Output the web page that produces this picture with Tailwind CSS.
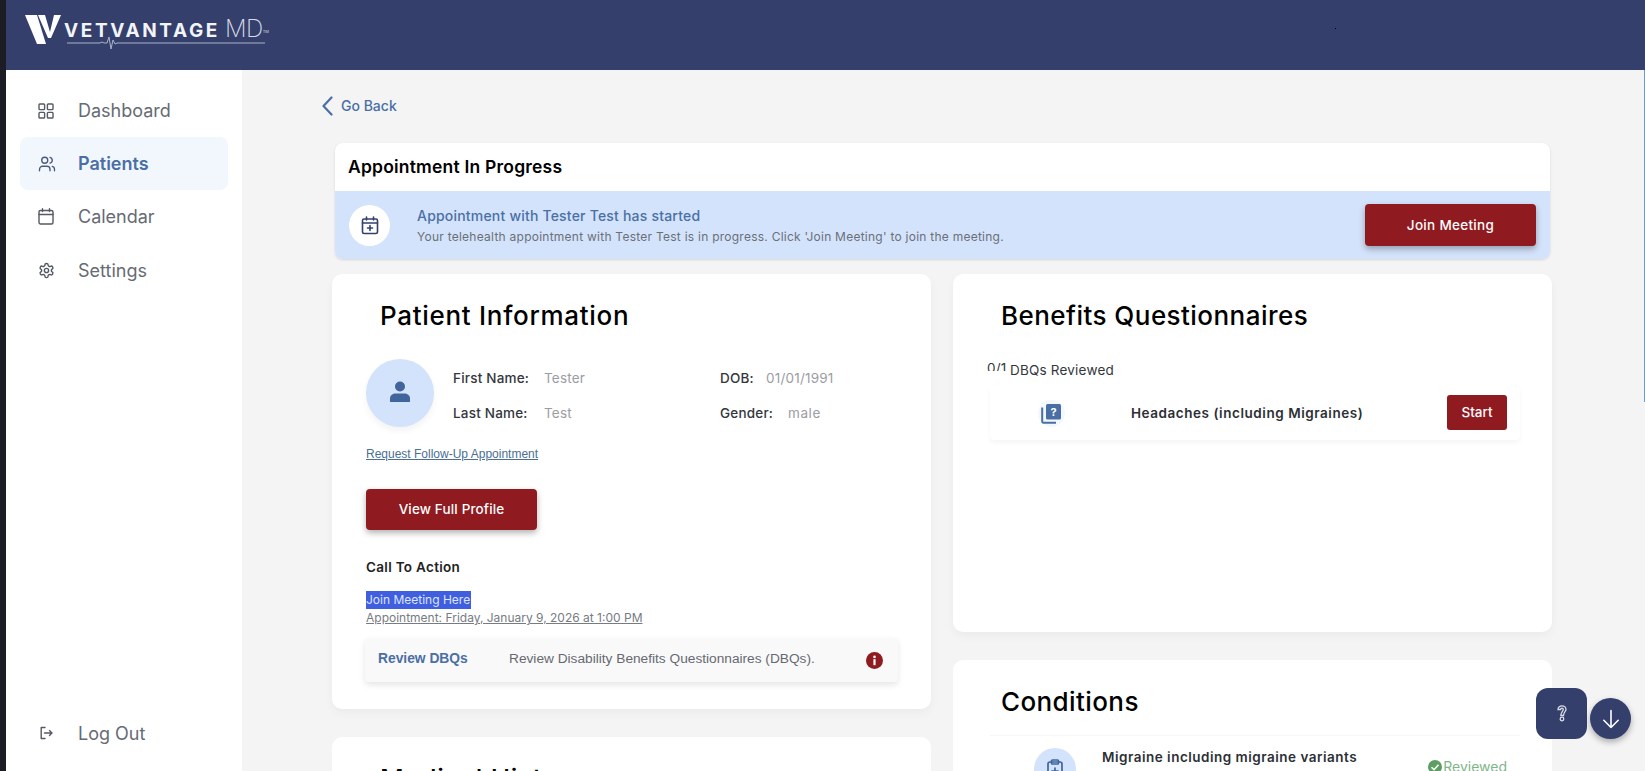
<!DOCTYPE html>
<html lang="en">
<head>
  <meta charset="UTF-8" />
  <meta name="viewport" content="width=device-width, initial-scale=1.0" />
  <script src="https://cdn.jsdelivr.net/npm/@tailwindcss/browser@4"></script>
  <title>VetVantage MD</title>
</head>
<body class="h-[771px] overflow-hidden bg-[#1c1c24] [font-family:Inter,sans-serif]">
  <div class="flex h-[771px] pl-[6px]">
    <div class="relative flex-1 flex flex-col min-w-0">

      <!-- top bar -->
      <header class="relative h-[70px] shrink-0 bg-[#34406b] flex items-start pl-[19px] pt-[14px]">
        <svg width="36" height="31" viewBox="0 0 36 31" class="shrink-0">
          <polygon points="0,1 12,1 21,30 12,30" fill="#fff"/>
          <polygon points="13,1 20,1 25,18 29,1 36,1 26,24 23,24" fill="#fff"/>
        </svg>
        <div class="relative ml-[3px] w-[205px] h-[36px]">
          <div class="flex items-baseline h-[26px] pt-[5px] leading-[20px]">
            <span class="text-[19px] font-bold tracking-[2.6px] text-[#f2f4f8]">VETVANTAGE</span>
            <span class="ml-[5px] text-[24px] font-extralight tracking-[-0.5px] text-[#d8dce8]">MD</span>
            <span class="text-[4px] text-[#d8dce8] self-start mt-[3px]">TM</span>
          </div>
          <svg width="200" height="14" viewBox="0 0 200 14" class="absolute left-[3px] top-[22px]" fill="none" stroke="#aab4cc" stroke-width="1">
            <path d="M0 7H33L35 6L37 7L40 7L42 1L44 13L46 4L48 8L50 7H198"/>
          </svg>
        </div>
        <span class="absolute left-[1329px] top-[28px] w-px h-px bg-black"></span>
      </header>

      <div class="flex flex-1 min-h-0">
        <!-- sidebar -->
        <aside class="w-[236px] shrink-0 bg-white flex flex-col justify-between px-[14px] pt-[14px] pb-[22px]">
          <nav class="flex flex-col text-[18px] text-[#666b73]">
            <a class="flex items-center h-[53px] pl-[18px] gap-[24px]">
              <svg width="16" height="16" viewBox="0 0 16 16" fill="none" stroke="#555a63" stroke-width="1.4" class="shrink-0"><rect x="1" y="1" width="5.6" height="5.6" rx=".8"/><rect x="9.4" y="1" width="5.6" height="5.6" rx=".8"/><rect x="1" y="9.4" width="5.6" height="5.6" rx=".8"/><rect x="9.4" y="9.4" width="5.6" height="5.6" rx=".8"/></svg>
              Dashboard
            </a>
            <a class="flex items-center h-[53px] pl-[18px] gap-[22px] rounded-[8px] bg-[#f2f7fd] font-semibold text-[#4a6fa5]">
              <svg width="18" height="18" viewBox="0 0 24 24" fill="none" stroke="#4a5a7a" stroke-width="1.8" stroke-linecap="round" stroke-linejoin="round" class="shrink-0"><path d="M16 21v-2a4 4 0 0 0-4-4H6a4 4 0 0 0-4 4v2"/><circle cx="9" cy="7" r="4"/><path d="M22 21v-2a4 4 0 0 0-3-3.87"/><path d="M16 3.13a4 4 0 0 1 0 7.75"/></svg>
              Patients
            </a>
            <a class="flex items-center h-[53px] pl-[18px] gap-[24px]">
              <svg width="16" height="17" viewBox="0 0 16 17" fill="none" stroke="#555a63" stroke-width="1.4" stroke-linecap="round" class="shrink-0"><rect x="1" y="2.5" width="14" height="13.5" rx="1.5"/><path d="M1 6.5H15M4.5 .8V3.5M11.5 .8V3.5"/></svg>
              Calendar
            </a>
            <a class="flex items-center h-[54px] pl-[18px] gap-[23px]">
              <svg width="17" height="17" viewBox="0 0 24 24" fill="none" stroke="#555a63" stroke-width="2" stroke-linecap="round" stroke-linejoin="round" class="shrink-0"><path d="M12.22 2h-.44a2 2 0 0 0-2 2v.18a2 2 0 0 1-1 1.73l-.43.25a2 2 0 0 1-2 0l-.15-.08a2 2 0 0 0-2.73.73l-.22.38a2 2 0 0 0 .73 2.73l.15.1a2 2 0 0 1 1 1.72v.51a2 2 0 0 1-1 1.74l-.15.09a2 2 0 0 0-.73 2.73l.22.38a2 2 0 0 0 2.73.73l.15-.08a2 2 0 0 1 2 0l.43.25a2 2 0 0 1 1 1.73V20a2 2 0 0 0 2 2h.44a2 2 0 0 0 2-2v-.18a2 2 0 0 1 1-1.73l.43-.25a2 2 0 0 1 2 0l.15.08a2 2 0 0 0 2.73-.73l.22-.39a2 2 0 0 0-.73-2.73l-.15-.08a2 2 0 0 1-1-1.74v-.5a2 2 0 0 1 1-1.74l.15-.09a2 2 0 0 0 .73-2.73l-.22-.38a2 2 0 0 0-2.73-.73l-.15.08a2 2 0 0 1-2 0l-.43-.25a2 2 0 0 1-1-1.73V4a2 2 0 0 0-2-2z"/><circle cx="12" cy="12" r="3"/></svg>
              Settings
            </a>
          </nav>
          <a class="flex items-center h-[32px] pl-[18px] gap-[24px] text-[18px] text-[#666b73]">
            <svg width="16" height="16" viewBox="0 0 16 16" fill="none" stroke="#555a63" stroke-width="1.4" stroke-linecap="round" stroke-linejoin="round" class="shrink-0"><path d="M7 2.5H3.2V13.5H7M6.5 8H14M11.5 5.5L14 8L11.5 10.5"/></svg>
            Log Out
          </a>
        </aside>

        <!-- main content -->
        <main class="flex-1 min-w-0 bg-[#f4f4f5] overflow-hidden pl-[90px]">
          <a class="flex items-center h-[20px] mt-[26px] -ml-[10px] gap-[8px] text-[14px] font-medium text-[#4a6fa5]">
            <svg width="11" height="20" viewBox="0 0 11 20" fill="none" stroke="#4a6fa5" stroke-width="2.2" stroke-linecap="round" stroke-linejoin="round"><path d="M9.5 1.5L1.5 10L9.5 18.5"/></svg>
            <span class="-mt-[1px]">Go Back</span>
          </a>

          <!-- appointment banner -->
          <section class="w-[1215px] ml-[3px] mt-[27px] rounded-[8px] overflow-hidden bg-white shadow-sm">
            <h2 class="h-[48px] flex items-center pl-[13px] pt-[1px] text-[17.5px] tracking-[0.2px] font-semibold text-black">Appointment In Progress</h2>
            <div class="h-[68px] bg-[#d3e3fb] flex items-center pl-[14px] pr-[14px]">
              <span class="w-[41px] h-[41px] rounded-full bg-white flex items-center justify-center shrink-0">
                <svg width="18" height="19" viewBox="0 0 18 19" fill="none" stroke="#34406b" stroke-width="1.6" stroke-linecap="round"><rect x="1.5" y="3" width="15" height="14.5" rx="1.6"/><path d="M1.5 7H16.5M5.5 1V4M12.5 1V4M9 9.5V14.5M6.5 12H11.5"/></svg>
              </span>
              <div class="ml-[27px] flex-1 min-w-0">
                <p class="text-[14px] tracking-[0.2px] leading-[19px] font-medium text-[#4a6fa5]">Appointment with Tester Test has started</p>
                <p class="mt-[3px] text-[12px] tracking-[0.25px] leading-[17px] text-[#6b7078]">Your telehealth appointment with Tester Test is in progress. Click 'Join Meeting' to join the meeting.</p>
              </div>
              <button class="w-[171px] h-[42px] rounded-[4px] bg-[#8f1a1f] text-white text-[13.5px] tracking-[0.3px] font-medium shadow-[0_3px_6px_rgba(0,0,0,0.3)]">Join Meeting</button>
            </div>
          </section>

          <div class="grid grid-cols-[599px_599px] gap-x-[22px] mt-[15px] w-[1220px]">
            <!-- left column -->
            <div class="flex flex-col gap-[28px]">
              <section class="h-[435px] bg-white rounded-[10px] shadow-[0_4px_10px_rgba(0,0,0,0.04)] pl-[34px] pr-[33px] pt-[25px]">
                <h2 class="pl-[14px] h-[34px] leading-[34px] text-[26px] tracking-[0.7px] font-medium text-black">Patient Information</h2>

                <div class="flex items-center mt-[26px]">
                  <span class="w-[68px] h-[68px] rounded-full bg-[#d3e3fb] flex items-center justify-center shrink-0 shadow-[0_4px_6px_rgba(0,0,0,0.05)]">
                    <svg width="20" height="21" viewBox="0 0 20 21" fill="#40659d" class="-mt-[3px]"><circle cx="10" cy="5.5" r="5"/><path d="M0 21V17.5C0 14 3 12.5 5.5 12.5H14.5C17 12.5 20 14 20 17.5V21Z"/></svg>
                  </span>
                  <div class="ml-[19px] mt-[5px] grid grid-cols-[267px_1fr] gap-y-[17px] text-[13.5px] tracking-[0.2px] leading-[18px] text-[#33373d] font-medium">
                    <div class="flex"><span class="w-[91px]">First Name:</span><span class="font-normal text-[#9a9da3]">Tester</span></div>
                    <div class="flex"><span class="w-[46px]">DOB:</span><span class="font-normal text-[#9a9da3]">01/01/1991</span></div>
                    <div class="flex"><span class="w-[91px]">Last Name:</span><span class="font-normal text-[#9a9da3]">Test</span></div>
                    <div class="flex"><span class="w-[68px]">Gender:</span><span class="font-normal tracking-[0.6px] text-[#9a9da3]">male</span></div>
                  </div>
                </div>

                <a class="block mt-[19px] h-[16px] leading-[16px] text-[12px] [font-family:'Liberation_Sans',sans-serif] underline text-[#4a6f94]">Request Follow-Up Appointment</a>

                <button class="block mt-[27px] w-[171px] h-[41px] rounded-[4px] bg-[#8f1a1f] text-white text-[13.5px] tracking-[0.15px] font-medium shadow-[0_3px_6px_rgba(0,0,0,0.3)]">View Full Profile</button>

                <h3 class="mt-[28px] h-[18px] leading-[18px] text-[13.5px] tracking-[0.3px] font-semibold text-[#222]">Call To Action</h3>

                <a class="block mt-[15px] w-[105px] h-[18px] leading-[18px] bg-[#3f5fe0] text-[12px] text-[#dde4fb] whitespace-nowrap overflow-hidden">Join Meeting Here</a>
                <a class="block h-[18px] leading-[18px] text-[12px] underline text-[#777b82]">Appointment: Friday, January 9, 2026 at 1:00 PM</a>

                <div class="flex items-center h-[44px] mt-[11px] -ml-px pl-[13px] pr-[15px] w-[533px] rounded-[4px] bg-[#f9f9fa] shadow-[0_3px_6px_rgba(0,0,0,0.1)] [font-family:'Liberation_Sans',sans-serif]">
                  <span class="w-[131px] -mt-[1px] text-[13.8px] font-bold text-[#4a6fa5]">Review DBQs</span>
                  <span class="flex-1 -mt-[1px] text-[13.7px] text-[#666a70]">Review Disability Benefits Questionnaires (DBQs).</span>
                  <svg width="17" height="17" viewBox="0 0 17 17"><circle cx="8.5" cy="8.5" r="8.5" fill="#8f1a1f"/><rect x="7.4" y="7.2" width="2.2" height="6" fill="#fff"/><circle cx="8.5" cy="4.9" r="1.3" fill="#fff"/></svg>
                </div>
              </section>

              <section class="h-[200px] bg-white rounded-[10px] pl-[48px] pt-[25px]">
                <h2 class="h-[34px] leading-[34px] text-[26px] tracking-[0.7px] font-medium text-black">Medical History</h2>
              </section>
            </div>

            <!-- right column -->
            <div class="flex flex-col gap-[28px]">
              <section class="h-[358px] bg-white rounded-[10px] shadow-[0_4px_10px_rgba(0,0,0,0.04)] pl-[34px] pr-[32px] pt-[25px]">
                <h2 class="pl-[14px] h-[34px] leading-[34px] text-[26px] tracking-[0.45px] font-medium text-black">Benefits Questionnaires</h2>
                <div class="flex items-center h-[18px] mt-[28px] text-[13.5px] tracking-[0.2px] text-[#33373d]">
                  <span class="h-[11px] overflow-hidden leading-[16px] self-start -mt-[1px] w-[23px]">0/1</span>
                  <span>DBQs Reviewed</span>
                </div>
                <div class="flex items-center h-[54px] mt-[7px] ml-[3px] w-[530px] pl-[48px] pr-[13px] rounded-[4px] shadow-[0_3px_5px_rgba(0,0,0,0.04)]">
                  <span class="w-[27px] h-[27px] rounded-full bg-[#f4f7fc] flex items-center justify-center shrink-0">
                    <svg width="21" height="21" viewBox="0 0 21 21"><path d="M1.2 4.5V18.5C1.2 19.4 1.7 19.8 2.5 19.8H15" fill="none" stroke="#4a6fa5" stroke-width="2"/><rect x="5" y="1" width="15" height="15.5" rx="1.5" fill="#4a6fa5"/><text x="12.5" y="13" text-anchor="middle" font-size="11" font-weight="700" fill="#fff">?</text></svg>
                  </span>
                  <span class="ml-[66px] flex-1 text-[13.5px] tracking-[0.55px] font-semibold text-[#2c2f35]">Headaches (including Migraines)</span>
                  <button class="w-[60px] h-[35px] -mt-[2px] rounded-[3px] bg-[#8f1a1f] text-white text-[13.5px] font-medium">Start</button>
                </div>
              </section>

              <section class="h-[200px] bg-white rounded-[10px] pl-[34px] pr-[32px] pt-[25px]">
                <h2 class="pl-[14px] h-[34px] leading-[34px] text-[26px] tracking-[0.4px] font-medium text-black">Conditions</h2>
                <div class="flex items-start mt-[16px] ml-[3px] w-[530px] h-[60px] pl-[44px] pr-[13px] pt-[12px] border-t border-[#f6f6f7]">
                  <span class="w-[42px] h-[42px] rounded-full bg-[#d3e3fb] flex items-center justify-center shrink-0">
                    <svg width="16" height="20" viewBox="0 0 16 20" fill="none" stroke="#40659d" stroke-width="1.7" stroke-linecap="round"><rect x="1" y="3" width="14" height="16" rx="2"/><rect x="4.5" y="1" width="7" height="4" rx="1"/><path d="M8 9V15M5 12H11"/></svg>
                  </span>
                  <span class="ml-[26px] flex-1 text-[13.5px] tracking-[0.5px] leading-[18px] font-semibold text-[#2c2f35]">Migraine including migraine variants</span>
                  <span class="flex items-center gap-px mt-[10px] text-[14px] leading-[18px] text-[#7fb58a]">
                    <svg width="14" height="14" viewBox="0 0 14 14"><circle cx="7" cy="7" r="7" fill="#5f9e63"/><path d="M3.5 7.2L6 9.7L10.5 4.8" fill="none" stroke="#fff" stroke-width="1.6"/></svg>
                    Reviewed
                  </span>
                </div>
              </section>
            </div>
          </div>
        </main>
      </div>

      <!-- thin line on the right edge -->
      <span class="absolute right-0 top-[70px] w-px h-[332px] bg-[#6d9cc0]"></span>

      <!-- floating buttons -->
      <button class="absolute left-[1530px] top-[688px] w-[51px] h-[51px] rounded-[12px] bg-[#34406b] flex items-center justify-center">
        <svg width="10" height="17" viewBox="0 0 10 17" fill="none" stroke="#d8dce8" stroke-width="1.3" stroke-linecap="round"><path d="M1 4.5C1 2.2 3 .8 5 .8C7 .8 9 2.2 9 4.5C9 6.5 6.5 7 6.5 10.5H3.8C3.8 7 6.2 6.5 6.2 4.5C6.2 3.7 5.7 3.2 5 3.2C4.2 3.2 3.6 3.7 3.6 4.5Z"/><circle cx="5" cy="14" r="1.8"/></svg>
      </button>
      <button class="absolute left-[1584px] top-[698px] w-[41px] h-[41px] rounded-full bg-[#34406b] flex items-center justify-center shadow-[0_3px_6px_rgba(0,0,0,0.3)]">
        <svg width="18" height="20" viewBox="0 0 18 20" fill="none" stroke="#fff" stroke-width="1.6" stroke-linecap="round" stroke-linejoin="round"><path d="M9 1.5V18.5M1.8 11.3L9 18.5L16.2 11.3"/></svg>
      </button>
    </div>
  </div>
</body>
</html>
